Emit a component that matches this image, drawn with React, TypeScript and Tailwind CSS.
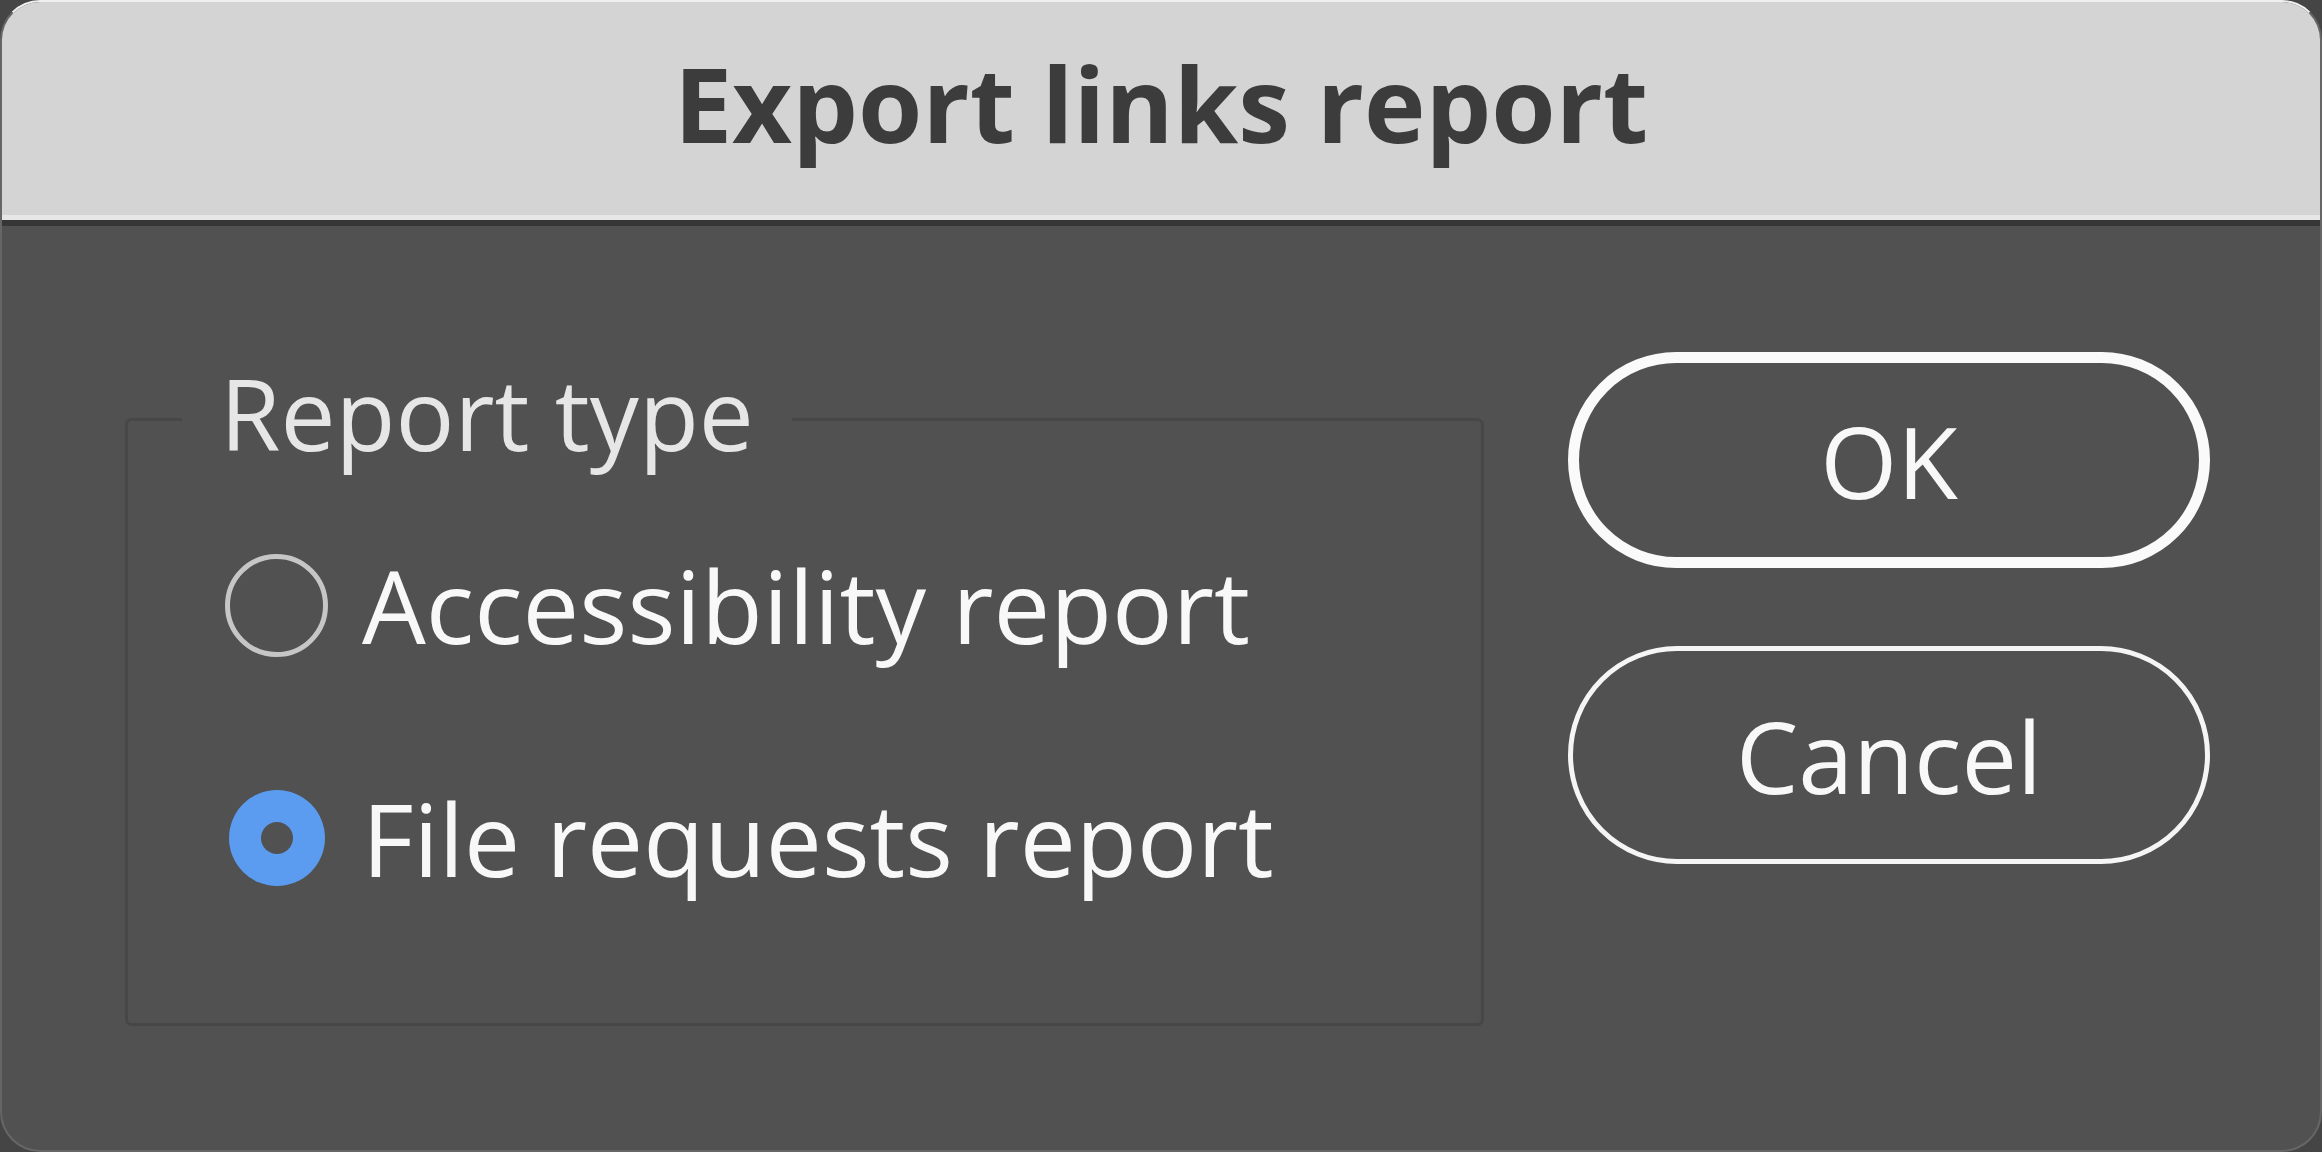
export default function App() {
  return (
    <div className="h-[1152px] w-[2322px] bg-[#454545] font-['Open_Sans',sans-serif]">
      <div className="flex h-full flex-col overflow-hidden rounded-[40px] border-2 border-[#666666] border-t-[#efefef] bg-[#515151]">
        {/* title bar */}
        <div className="h-[213px] shrink-0 bg-[#d4d4d4] pt-[49px] text-center">
          <h1 className="text-[104px] leading-none font-bold text-[#3c3c3c]">Export links report</h1>
        </div>
        <div className="h-[5px] shrink-0 bg-[#e6e6e6]" />
        <div className="h-[6px] shrink-0 bg-[#363636]" />

        {/* body */}
        <div className="flex pl-[123px]">
          <fieldset className="mt-[138px] w-[1359px] rounded-[7px] border-[3px] border-[#474747] pt-[80px] pb-[134px]">
            <legend className="ml-[54px] px-[38px] pb-[12px] text-[98px] leading-none text-[#e6e6e6]">
              Report type
            </legend>
            <div className="flex flex-col gap-[129px] pl-[97px]">
              <label className="flex h-[103px] items-center gap-[34px]">
                <span className="h-[103px] w-[103px] rounded-full border-[5px] border-[#c6c6c6]" />
                <span className="text-[101px] leading-none text-[#f8f8f8]">Accessibility report</span>
              </label>
              <label className="flex h-[103px] items-center gap-[34px]">
                <span className="flex h-[103px] w-[103px] items-center justify-center">
                  <span className="flex h-[96px] w-[96px] items-center justify-center rounded-full bg-[#5b9cf0]">
                    <span className="h-[32px] w-[32px] rounded-full bg-[#515151]" />
                  </span>
                </span>
                <span className="text-[100px] leading-none text-[#f8f8f8]">File requests report</span>
              </label>
            </div>
          </fieldset>

          <div className="ml-[84px] flex w-[642px] flex-col gap-[78px] pt-[126px]">
            <button className="flex h-[216px] items-center justify-center rounded-full border-[11px] border-[#fafafa] text-[99px] leading-none text-[#f8f8f8]">
              OK
            </button>
            <button className="flex h-[218px] items-center justify-center rounded-full border-[5px] border-[#f5f5f5] text-[99px] leading-none text-[#f8f8f8]">
              Cancel
            </button>
          </div>
        </div>
      </div>
    </div>
  )
}
